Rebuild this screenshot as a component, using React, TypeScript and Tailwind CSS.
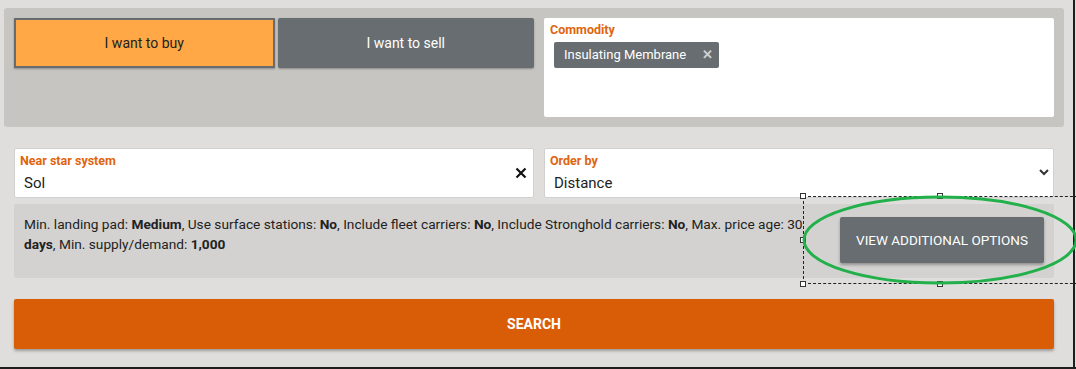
import React from "react";

export default function App() {
  return (
    <div className="relative w-[1076px] h-[369px] bg-[#dfdedc] overflow-hidden" style={{ fontFamily: "Roboto, 'Noto Sans', sans-serif" }}>
      <div className="absolute right-[1px] top-0 h-full w-[2px] bg-[#1e1e1e]" />
      <div className="absolute left-0 bottom-0 w-full h-[2px] bg-[#1e1e1e]" />
      <div className="pl-[4px] pr-[12px] pt-[8px]">
        {/* top panel */}
        <div className="bg-[#c6c5c1] rounded-[3px] flex gap-[10px] p-[10px] h-[119px]">
          <div className="flex w-[520px] gap-[3px] h-[50px]">
            <div className="flex-1 bg-[#ffa845] border-2 border-[#666c6f] flex items-center justify-center text-[14px] text-[#222] shadow-[0_1px_2px_rgba(0,0,0,0.3)]">
              I want to buy
            </div>
            <div className="flex-1 bg-[#676d70] rounded-[2px] flex items-center justify-center text-[14px] text-white shadow-[0_1px_2px_rgba(0,0,0,0.3)]">
              I want to sell
            </div>
          </div>
          <div className="flex-1 bg-white rounded-[2px] px-[6px] pt-[5px]">
            <div className="text-[12.5px] font-bold text-[#e0650e] leading-[14px]">Commodity</div>
            <div className="mt-[5px] ml-[4px] inline-flex items-center h-[26px] bg-[#676d70] rounded-[2px] text-white text-[13px] pl-[10px] pr-[6px]">
              <span>Insulating Membrane</span>
              <span className="ml-[16px] text-[#d0d0d0] text-[13px] font-bold">✕</span>
            </div>
          </div>
        </div>
      </div>
      <div className="pl-[14px] pr-[22px] pt-[21px]">
        <div className="flex gap-[10px] h-[50px]">
          <div className="w-[520px] bg-white rounded-[2px] border border-[#d0d0d0] px-[5px] pt-[5px] relative">
            <div className="text-[12.5px] font-bold text-[#e0650e] leading-[14px]">Near star system</div>
            <div className="text-[15px] text-[#222] mt-[4px] ml-[4px]">Sol</div>
            <svg className="absolute right-[6px] top-[18px]" width="12" height="12" viewBox="0 0 12 12">
              <path d="M1.5 1.5 L10.5 10.5 M10.5 1.5 L1.5 10.5" stroke="#111" strokeWidth="2.2" />
            </svg>
          </div>
          <div className="flex-1 bg-white rounded-[2px] border border-[#d0d0d0] px-[5px] pt-[5px] relative">
            <div className="text-[12.5px] font-bold text-[#e0650e] leading-[14px]">Order by</div>
            <div className="text-[15px] text-[#222] mt-[4px] ml-[4px]">Distance</div>
            <svg className="absolute right-[4px] top-[19px]" width="10" height="8" viewBox="0 0 10 8">
              <path d="M1 2 L5 6 L9 2" stroke="#333" strokeWidth="2" fill="none" />
            </svg>
          </div>
        </div>
        <div className="mt-[6px] h-[74px] bg-[#d3d2d0] rounded-[2px] flex">
          <div className="w-[796px] shrink-0 pl-[10px] pt-[10px] text-[13.7px] leading-[20px] text-[#222] relative z-10">
            Min. landing pad: <b>Medium</b>, Use surface stations: <b>No</b>, Include fleet carriers: <b>No</b>, Include Stronghold carriers: <b>No</b>, Max. price age: 30 <b>days</b>, Min. supply/demand: <b>1,000</b>
          </div>
          <div className="flex-1 flex items-start justify-end pr-[10px] pt-[13px]">
            <div className="w-[204px] h-[46px] bg-[#676d70] rounded-[2px] flex items-center justify-center text-white text-[13.5px] shadow-[0_2px_3px_rgba(0,0,0,0.3)]">
              VIEW ADDITIONAL OPTIONS
            </div>
          </div>
        </div>
        <div className="mt-[21px] h-[50px] bg-[#d95d07] rounded-[2px] flex items-center justify-center text-white text-[14px] font-bold shadow-[0_2px_3px_rgba(0,0,0,0.3)]">
          SEARCH
        </div>
      </div>
      {/* annotation overlay */}
      <div className="absolute left-[803px] top-[196px] w-[280px] h-[88px] border border-dashed border-[#222]" />
      {[
        [803, 196], [940, 196], [803, 240], [940, 284], [803, 284],
      ].map(([x, y], i) => (
        <div key={i} className="absolute w-[6px] h-[6px] bg-white border border-[#333]" style={{ left: x - 3, top: y - 3 }} />
      ))}
      <svg className="absolute left-0 top-0 pointer-events-none" width="1076" height="369">
        <ellipse cx="940" cy="240" rx="136" ry="43" fill="none" stroke="#22b04b" strokeWidth="3" />
      </svg>
    </div>
  );
}
